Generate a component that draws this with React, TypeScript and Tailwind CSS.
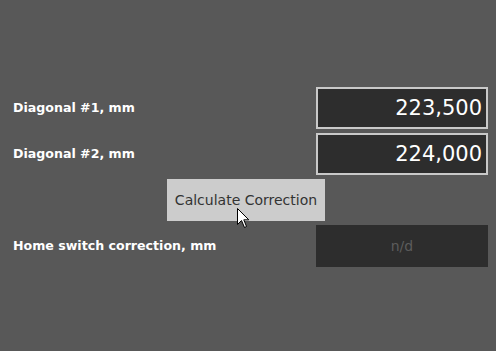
import React from "react";

const font = { fontFamily: "'DejaVu Sans', Verdana, sans-serif" };

function ValueBox({ value }: { value: string }) {
  return (
    <div className="w-[172px] h-[42px] bg-[#2d2d2d] border-2 border-[#c9c9c9] flex items-center justify-end pr-[4px] text-white text-[21px] leading-none">
      {value}
    </div>
  );
}

function Cursor() {
  return (
    <svg className="absolute left-[237px] top-[208px]" width="13" height="21" viewBox="0 0 13 21">
      <path d="M0.5 0.5 L0.5 16.5 L4.5 12.5 L7.5 19.5 L9.5 18.5 L6.8 11.8 L11.8 11.8 Z" fill="#fff" stroke="#000" strokeWidth="1" strokeLinejoin="miter" />
    </svg>
  );
}

export default function App() {
  return (
    <div className="relative w-[496px] h-[351px] bg-[#585858] overflow-hidden" style={font}>
      <div className="flex flex-col gap-[4px] pt-[87px] pl-[13px] pr-[8px]">
        <div className="flex items-center justify-between h-[42px]">
          <span className="text-white text-[12.6px] font-bold">Diagonal #1, mm</span>
          <ValueBox value="223,500" />
        </div>
        <div className="flex items-center justify-between h-[42px]">
          <span className="text-white text-[12.6px] font-bold">Diagonal #2, mm</span>
          <ValueBox value="224,000" />
        </div>
        <div className="flex h-[42px] pl-[154px]">
          <button className="w-[158px] h-[42px] bg-[#cccccc] text-[#333] text-[14px]">Calculate Correction</button>
        </div>
        <div className="flex items-center justify-between h-[42px]">
          <span className="text-white text-[12.6px] font-bold">Home switch correction, mm</span>
          <div className="w-[172px] h-[42px] bg-[#2d2d2d] flex items-center justify-center text-[#5c5c5c] text-[14px]">n/d</div>
        </div>
      </div>
      <Cursor />
    </div>
  );
}
